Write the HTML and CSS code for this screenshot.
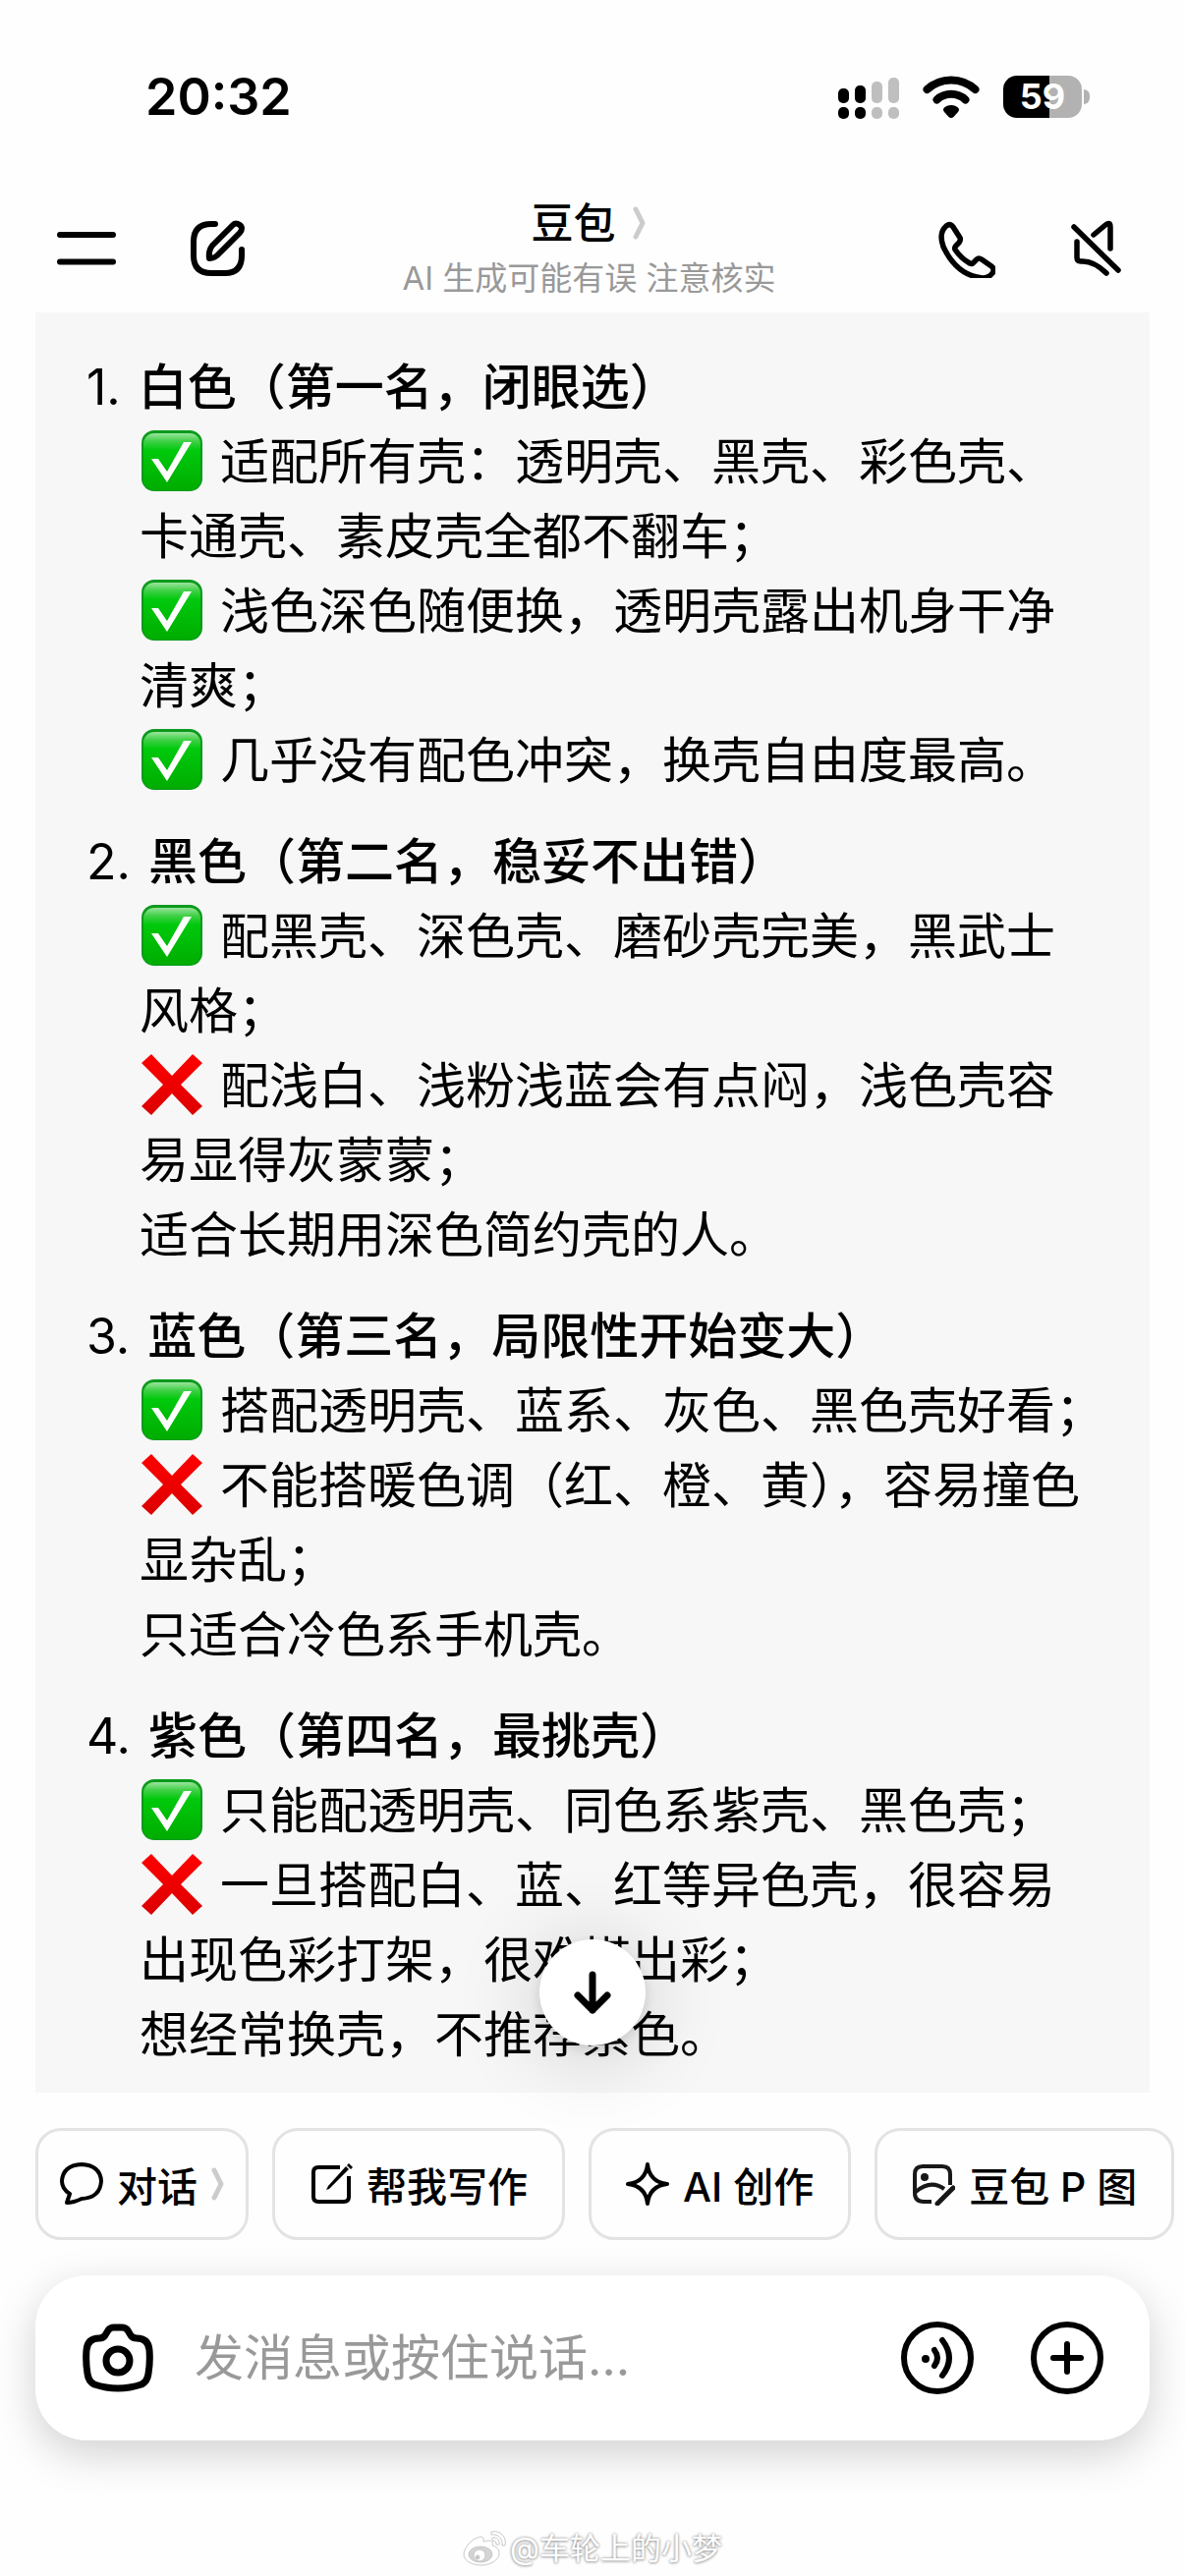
FILE: index.html
```html
<!DOCTYPE html>
<html lang="zh-CN">
<head>
<meta charset="utf-8">
<meta name="viewport" content="width=device-width">
<title>豆包</title>
<link rel="stylesheet" href="styles.css">
</head>
<body>
<svg class="defs" aria-hidden="true">
  <defs>
    <linearGradient id="green" x1="0" y1="0" x2="0" y2="1">
      <stop offset="0" stop-color="#9be49d"/><stop offset="0.14" stop-color="#3fd046"/><stop offset="0.3" stop-color="#00c90c"/><stop offset="1" stop-color="#00ac00"/>
    </linearGradient>
    <linearGradient id="red" x1="0" y1="0" x2="0" y2="1">
      <stop offset="0" stop-color="#ff0000"/><stop offset="1" stop-color="#dc0000"/>
    </linearGradient>
    <symbol id="yes" viewBox="0 0 62 62">
      <rect width="62" height="62" rx="13" fill="#0b9a1c"/>
      <rect x="2" y="3" width="58" height="58" rx="11" fill="url(#green)"/>
      <path d="M10 29h7l9 13L43 12h8L26 53z" fill="#fff"/>
    </symbol>
    <symbol id="no" viewBox="0 0 62 62">
      <path d="M10 0 31 22 52 0l10 9-22 22 22 22-10 9-21-22-21 22-10-9 22-22L0 9z" fill="url(#red)"/>
    </symbol>
  </defs>
</svg>

<div class="status">
  <time class="clock">20:32</time>
  <div class="indicators">
    <svg class="signal" width="62" height="42" viewBox="0 0 62 42">
      <g fill="#000"><rect y="11" width="11" height="15" rx="5"/><rect x="17" y="8" width="11" height="18" rx="5"/><rect y="30" width="11" height="12" rx="5"/><rect x="17" y="30" width="11" height="12" rx="5"/></g>
      <g fill="#bfbfbf"><rect x="34" y="4" width="11" height="22" rx="5"/><rect x="51" width="11" height="26" rx="5"/><rect x="34" y="30" width="11" height="12" rx="5"/><rect x="51" y="30" width="11" height="12" rx="5"/></g>
    </svg>
    <svg class="wifi" width="58" height="43" viewBox="0 0 58 43">
      <path d="M4.500 14a36 36 0 0 1 49 0M14.500 24.500a21.500 21.500 0 0 1 29 0" fill="none" stroke="#000" stroke-width="8" stroke-linecap="round"/>
      <path d="M29 43q-1.500 0-2.500-1L22 37q-2-2-.5-4 3-3 7.500-3t7.500 3q1.500 2-.5 4l-4.500 5q-1 1-2.500 1z"/>
    </svg>
    <div class="battery"><span class="level">59</span></div>
  </div>
</div>

<header class="topbar">
  <div class="tools">
    <button class="icon" aria-label="菜单"><svg width="60" height="60" viewBox="0 0 60 60"><path d="M3 16h54M3 43.500h54" stroke="#000" stroke-width="6" stroke-linecap="round"/></svg></button>
    <button class="icon" aria-label="新对话"><svg width="60" height="60" viewBox="0 0 60 60" fill="none" stroke="#000" stroke-width="6" stroke-linecap="round" stroke-linejoin="round"><path d="M27 5H23Q5 5 5 23v14q0 18 18 18h14q17 0 17-18v-6"/><path d="M21 40q-1-8 3-13L45 6q3-3 7 0t0 8L31 35q-4 5-10 5z"/></svg></button>
  </div>
  <div class="heading">
    <h1 class="name">豆包<svg width="14" height="34" viewBox="0 0 14 34"><path d="M3 3l7 14-7 14" fill="none" stroke="#ccc" stroke-width="5" stroke-linecap="round" stroke-linejoin="round"/></svg></h1>
    <p class="note">AI 生成可能有误 注意核实</p>
  </div>
  <div class="tools tools-end">
    <button class="icon" aria-label="通话"><svg width="60" height="60" viewBox="0 0 60 60" fill="none" stroke="#000" stroke-width="5.500" stroke-linejoin="round"><path d="M10 7q4-3 7 1l7 11q1 2-1 5l-3 3q-2 2-1 4 6 9 15 14 2 1 3 0l4-4q2-2 5 0l10 7q4 3 1 7-5 7-16 4Q19 54 7 28 2 14 10 7z"/></svg></button>
    <button class="icon" aria-label="静音"><svg width="52" height="60" viewBox="0 0 52 60" fill="none" stroke="#000" stroke-width="5.500" stroke-linecap="round" stroke-linejoin="round"><path d="M4 8l45 44M24 16 36 6q5-4 5 2v22M7 23v16q0 4 4 4 13-1 26 12"/></svg></button>
  </div>
</header>

<main class="chat">
  <ol class="answer">
    <li class="rank">
      <h2 class="label"><span class="num">1.</span>白色（第一名，闭眼选）</h2>
      <p class="detail"><svg class="mark"><use href="#yes"/></svg>适配所有壳：透明壳、黑壳、彩色壳、<br>卡通壳、素皮壳全都不翻车；<br><svg class="mark"><use href="#yes"/></svg>浅色深色随便换，透明壳露出机身干净<br>清爽；<br><svg class="mark"><use href="#yes"/></svg>几乎没有配色冲突，换壳自由度最高。</p>
    </li>
    <li class="rank">
      <h2 class="label"><span class="num">2.</span>黑色（第二名，稳妥不出错）</h2>
      <p class="detail"><svg class="mark"><use href="#yes"/></svg>配黑壳、深色壳、磨砂壳完美，黑武士<br>风格；<br><svg class="mark"><use href="#no"/></svg>配浅白、浅粉浅蓝会有点闷，浅色壳容<br>易显得灰蒙蒙；<br>适合长期用深色简约壳的人。</p>
    </li>
    <li class="rank">
      <h2 class="label"><span class="num">3.</span>蓝色（第三名，局限性开始变大）</h2>
      <p class="detail"><svg class="mark"><use href="#yes"/></svg>搭配透明壳、蓝系、灰色、黑色壳好看；<br><svg class="mark"><use href="#no"/></svg>不能搭暖色调（红、橙、黄），容易撞色<br>显杂乱；<br>只适合冷色系手机壳。</p>
    </li>
    <li class="rank">
      <h2 class="label"><span class="num">4.</span>紫色（第四名，最挑壳）</h2>
      <p class="detail"><svg class="mark"><use href="#yes"/></svg>只能配透明壳、同色系紫壳、黑色壳；<br><svg class="mark"><use href="#no"/></svg>一旦搭配白、蓝、红等异色壳，很容易<br>出现色彩打架，很难搭出彩；<br>想经常换壳，不推荐紫色。</p>
    </li>
  </ol>
  <button class="to-bottom" aria-label="滚动到底部"><svg width="42" height="46" viewBox="0 0 42 46" fill="none" stroke="#000" stroke-width="7" stroke-linecap="round" stroke-linejoin="round"><path d="M21 5v36M6 26l15 15 15-15"/></svg></button>
</main>

<nav class="chips">
  <button class="chip chip-mode">
    <svg width="44" height="44" viewBox="0 0 44 44" fill="none" stroke="#000" stroke-width="4" stroke-linejoin="round"><path d="M7 41l3-9Q2 27 2 19 3 3 22 2q19 1 20 17-1 17-20 18-8 4-15 4z"/></svg>
    对话
    <svg class="more" width="14" height="34" viewBox="0 0 14 34"><path d="M3 3l7 14-7 14" fill="none" stroke="#ccc" stroke-width="5" stroke-linecap="round" stroke-linejoin="round"/></svg>
  </button>
  <button class="chip">
    <svg width="44" height="44" viewBox="0 0 44 44" fill="none" stroke="#000" stroke-width="4"><path d="M31 5H9Q4 5 4 10v25q0 5 5 5h26q5 0 5-5V14"/><path d="M17 28l2-4L37 4l3 3-20 20z" fill="#000" stroke="none"/><path d="M40 1l4 4-2 2-4-4z" fill="#000" stroke="none"/></svg>
    帮我写作
  </button>
  <button class="chip">
    <svg width="44" height="44" viewBox="0 0 44 44" fill="none" stroke="#000" stroke-width="4" stroke-linejoin="round"><path d="M22 2q2 18 20 20-18 2-20 20-2-18-20-20 18-2 20-20z"/></svg>
    AI 创作
  </button>
  <button class="chip">
    <svg width="44" height="44" viewBox="0 0 44 44" fill="none" stroke="#181818" stroke-width="4"><path d="M20 40h-8q-9 0-9-9V12q0-8 8-8h20q8 0 8 8v11M4 30q15-13 29-3"/><circle cx="13" cy="15" r="4" fill="#181818" stroke="none"/><path d="M42 26 26 42" stroke-width="5" stroke-linecap="round"/></svg>
    豆包 P 图
  </button>
</nav>

<form class="composer">
  <button class="icon" type="button" aria-label="拍照"><svg width="76" height="76" viewBox="0 0 76 76" fill="none" stroke="#000" stroke-width="7"><path d="M28 10q2-3 6-3h8q4 0 6 3l3 5q2 3 6 3 12 0 13 12 1 12-1 24-1 8-7 11-24 8-48 0-6-3-7-11-2-12-1-24 1-12 13-12 4 0 6-3z"/><circle cx="38" cy="41" r="12"/></svg></button>
  <input class="message" type="text" aria-label="消息" placeholder="发消息或按住说话…">
  <button class="icon" type="button" aria-label="语音"><svg width="76" height="76" viewBox="0 0 76 76" fill="none" stroke="#000" stroke-width="6" stroke-linecap="round"><circle cx="38" cy="38" r="34"/><circle cx="26" cy="39" r="4" fill="#000" stroke="none"/><path d="M35 30q6 8 0 16M43 20q14 18 0 36"/></svg></button>
  <button class="icon" type="button" aria-label="更多"><svg width="76" height="76" viewBox="0 0 76 76" fill="none" stroke="#000" stroke-width="6" stroke-linecap="round"><circle cx="38" cy="38" r="34"/><path d="M24 38h28M38 24v28"/></svg></button>
</form>

<footer class="credit">
  <svg width="44" height="36" viewBox="0 0 44 36"><g fill="#fff" stroke="#c8c8c8" stroke-width="1"><path d="M15 7c4-2 7-1 6 4 6-2 11-1 9 4 4 1 7 3 7 8 0 7-9 12-18 12S1 31 1 24C1 18 8 9 15 7z"/><ellipse cx="18" cy="24" rx="12" ry="8" fill="#d4d4d4"/><circle cx="17" cy="25" r="6"/><circle cx="15" cy="27" r="2" fill="#c4c4c4"/><path d="M29 1c9-2 16 5 14 14h-3c1-7-4-12-11-11zM30 7c5-1 8 3 7 7h-3c0-3-1-4-4-4z"/></g></svg>
  <span>@车轮上的小梦</span>
</footer>
</body>
</html>
```
FILE: styles.css
```css
* { box-sizing: border-box; margin: 0; padding: 0; }

body {
  display: flex;
  flex-direction: column;
  min-height: 100vh;
  overflow-x: hidden;
  background: #fefefe;
  color: #000;
  font-family: Inter, "Noto Sans CJK SC", sans-serif;
}

button, input { border: 0; background: none; color: inherit; font: inherit; }
svg { flex: none; }
.defs { position: absolute; width: 0; height: 0; }

.status {
  display: flex;
  align-items: center;
  justify-content: space-between;
  height: 196px;
  padding: 0 97px 0 148px;
}
.clock { font-size: 52px; font-weight: 600; }
.indicators { display: flex; align-items: center; gap: 24px; }
.signal { margin-top: 4px; }
.battery {
  position: relative;
  width: 80px;
  height: 43px;
  margin-right: 8px;
  border-radius: 14px;
  background: linear-gradient(90deg, #000 59%, #b2b2b2 59%);
  color: #fff;
  font-size: 36px;
  font-weight: 700;
  line-height: 43px;
  text-align: center;
}
.battery::after {
  content: "";
  position: absolute;
  top: 14px;
  right: -8px;
  width: 6px;
  height: 15px;
  border-radius: 0 6px 6px 0;
  background: #b2b2b2;
}

.topbar {
  display: grid;
  grid-template-columns: 1fr auto 1fr;
  align-items: center;
  height: 122px;
  padding: 0 65px 8px 58px;
}
.tools { display: flex; align-items: center; gap: 74px; }
.tools-end { justify-content: flex-end; gap: 76px; }
.icon { display: flex; }
.heading { display: flex; flex-direction: column; align-items: center; }
.name {
  display: flex;
  align-items: center;
  gap: 18px;
  font-size: 43px;
  font-weight: 500;
  line-height: 60px;
}
.note { color: #999; font-size: 33px; line-height: 52px; }

.chat { position: relative; margin: 0 36px; background: #f7f7f7; }
.answer {
  display: flex;
  flex-direction: column;
  gap: 27px;
  padding: 38px 52px 21px;
  list-style: none;
  font-size: 50px;
  line-height: 76px;
  white-space: nowrap;
}
.label { display: flex; gap: 18px; font-size: 50px; font-weight: 500; }
.num { font-weight: 400; }
.detail { padding-left: 54px; }
.mark {
  width: 62px;
  height: 62px;
  margin: 0 18px 0 2px;
  vertical-align: -12px;
}
.to-bottom {
  position: absolute;
  bottom: 48px;
  left: 50%;
  display: grid;
  place-items: center;
  width: 108px;
  height: 108px;
  margin-left: -54px;
  border-radius: 50%;
  background: #fff;
  box-shadow: 0 4px 12px rgba(0, 0, 0, 0.12), 0 8px 90px rgba(0, 0, 0, 0.2);
}

.chips {
  display: flex;
  gap: 24px;
  padding: 36px 0 36px 36px;
  white-space: nowrap;
}
.chip {
  display: flex;
  flex: none;
  align-items: center;
  gap: 14px;
  height: 114px;
  padding: 0 35px;
  border: 3px solid #e3e3e3;
  border-radius: 26px;
  font-size: 41px;
  font-weight: 500;
}
.chip-mode { padding: 0 21px 0 22px; }

.composer {
  display: flex;
  align-items: center;
  height: 168px;
  margin: 0 36px;
  padding: 0 46px;
  gap: 56px;
  border-radius: 52px;
  background: #fff;
  box-shadow: 0 14px 44px rgba(0, 0, 0, 0.18);
}
.message {
  flex: 1;
  min-width: 0;
  height: 84px;
  margin-left: -16px;
  font-size: 50px;
}
.message::placeholder { color: #999; opacity: 1; }

.credit {
  display: flex;
  align-items: center;
  justify-content: center;
  gap: 4px;
  margin-top: auto;
  padding-bottom: 8px;
  color: #fff;
  font-size: 31px;
  line-height: 40px;
  text-shadow: 0 0 3px #888, 0 1px 3px #bbb;
}
```
